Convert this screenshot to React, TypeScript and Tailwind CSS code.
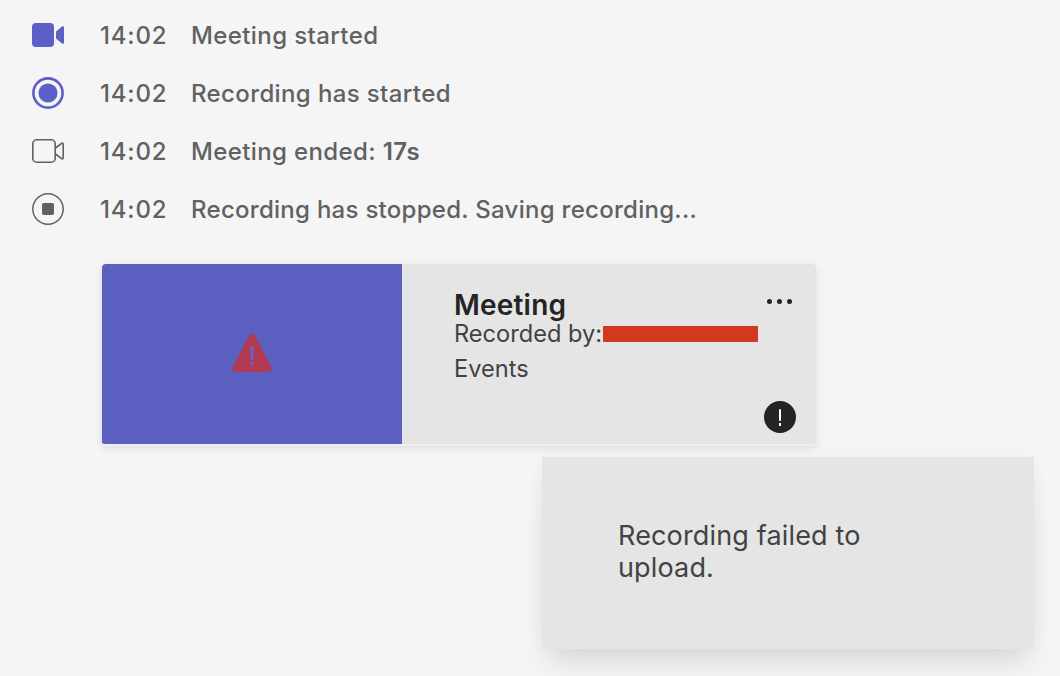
import React from "react";

const font = { fontFamily: "Inter, 'Noto Sans', sans-serif" };

function VideoFilled() {
  return (
    <svg width="32" height="24" viewBox="0 0 32 24">
      <rect x="0" y="0" width="22" height="24" rx="4" fill="#5b5fc7" />
      <path d="M24 8.5 L30 3.6 C31 2.9 32 3.5 32 4.6 V19.4 C32 20.5 31 21.1 30 20.4 L24 15.5 Z" fill="#5b5fc7" />
    </svg>
  );
}
function RecordOn() {
  return (
    <svg width="32" height="32" viewBox="0 0 32 32">
      <circle cx="16" cy="16" r="14.6" fill="none" stroke="#5b5fc7" strokeWidth="2.6" />
      <circle cx="16" cy="16" r="9.6" fill="#5b5fc7" />
    </svg>
  );
}
function VideoOutline() {
  return (
    <svg width="32" height="24" viewBox="0 0 32 24">
      <rect x="0.8" y="0.8" width="22.4" height="22.4" rx="4" fill="none" stroke="#616161" strokeWidth="1.6" />
      <path d="M23.5 9 L29.6 4.4 C30.4 3.8 31.2 4.3 31.2 5.2 V18.8 C31.2 19.7 30.4 20.2 29.6 19.6 L23.5 15" fill="none" stroke="#616161" strokeWidth="1.6" />
    </svg>
  );
}
function RecordStop() {
  return (
    <svg width="32" height="32" viewBox="0 0 32 32">
      <circle cx="16" cy="16" r="15.2" fill="none" stroke="#616161" strokeWidth="1.5" />
      <rect x="10" y="10" width="12" height="12" rx="2" fill="#616161" />
    </svg>
  );
}

const rows: { icon: React.ReactNode; label: React.ReactNode; cls: string }[] = [
  { icon: <VideoFilled />, label: "Meeting started", cls: "tracking-[0.4px] pt-[2px]" },
  { icon: <RecordOn />, label: "Recording has started", cls: "tracking-[0.38px] pt-[2px]" },
  {
    icon: <VideoOutline />,
    label: (
      <>
        Meeting ended: <span className="font-semibold">17s</span>
      </>
    ),
    cls: "tracking-[0.38px] pt-[2px]",
  },
  { icon: <RecordStop />, label: "Recording has stopped. Saving recording...", cls: "tracking-[0.28px] pt-[2px]" },
];

export default function App() {
  return (
    <div
      className="relative w-[1060px] h-[676px] overflow-hidden bg-[#f5f5f5] pt-[6px]"
      style={font}
    >
      <div className="flex flex-col pl-[32px]">
        {rows.map((r, i) => (
          <div key={i} className="flex items-center h-[58px] text-[24px] font-medium text-[#616161]">
            <div className="w-[68px] flex items-center">{r.icon}</div>
            <div className="w-[91px] tracking-[0.8px] pt-[2px]">14:02</div>
            <div className={r.cls}>{r.label}</div>
          </div>
        ))}
      </div>

      <div className="ml-[102px] mt-[26px] w-[714px] h-[182px] flex rounded-[4px] overflow-hidden bg-[#e5e5e5] border-b-2 border-[#eeeeee] shadow-[0_2px_8px_rgba(0,0,0,0.1)]">
        <div className="w-[300px] h-full bg-[#5b5fc0] flex items-center justify-center">
          <svg width="42" height="40" viewBox="0 0 42 40">
            <path
              d="M21 0 C22.5 0 23.6 0.8 24.4 2.2 L40 32.4 C41.4 35 40 38 36.8 38 H5.2 C2 38 0.6 35 2 32.4 L17.6 2.2 C18.4 0.8 19.5 0 21 0 Z"
              fill="#b23b52"
            />
            <rect x="19.4" y="12" width="3.2" height="14" rx="1.6" fill="#6a62c0" />
            <circle cx="21" cy="29.5" r="2" fill="#6a62c0" />
          </svg>
        </div>
        <div className="relative flex-1 pl-[52px] pt-[25px] text-[#424242]">
          <div className="text-[28px] leading-[32px] font-semibold tracking-[0.2px] text-[#242424]">Meeting</div>
          <div className="text-[23.6px] leading-[28px] mt-[-1px]">Recorded by:</div>
          <div className="absolute left-[201px] top-[62px] w-[155px] h-[16px] bg-[#d2391f]" />
          <div className="text-[23.6px] leading-[28px] mt-[7px]">Events</div>
          <div className="absolute left-[365px] top-[35px] flex gap-[5px]">
            <span className="w-[5px] h-[5px] rounded-full bg-[#242424]" />
            <span className="w-[5px] h-[5px] rounded-full bg-[#242424]" />
            <span className="w-[5px] h-[5px] rounded-full bg-[#242424]" />
          </div>
          <div className="absolute left-[362px] top-[137px] w-[32px] h-[32px] rounded-full bg-[#242424] flex flex-col items-center justify-center">
            <span className="w-[2px] h-[12px] bg-white rounded-full" />
            <span className="w-[2px] h-[3px] bg-white mt-[2px]" />
          </div>
        </div>
      </div>

      <div className="absolute left-[542px] top-[457px] w-[492px] h-[192px] bg-[#e5e5e5] pl-[76px] pt-[63px] text-[27px] leading-[32px] tracking-[0.15px] text-[#424242] shadow-[0_20px_28px_-8px_rgba(0,0,0,0.12),0_0_16px_rgba(0,0,0,0.03)]">
        <div className="w-[300px]">Recording failed to upload.</div>
      </div>
    </div>
  );
}
